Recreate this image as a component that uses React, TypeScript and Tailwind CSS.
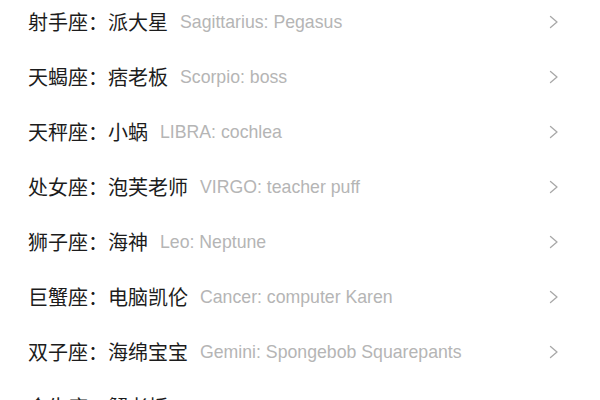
const rows = [
  { zh: '射手座：', name: '派大星', en: 'Sagittarius: Pegasus' },
  { zh: '天蝎座：', name: '痞老板', en: 'Scorpio: boss' },
  { zh: '天秤座：', name: '小蜗', en: 'LIBRA: cochlea' },
  { zh: '处女座：', name: '泡芙老师', en: 'VIRGO: teacher puff' },
  { zh: '狮子座：', name: '海神', en: 'Leo: Neptune' },
  { zh: '巨蟹座：', name: '电脑凯伦', en: 'Cancer: computer Karen' },
  { zh: '双子座：', name: '海绵宝宝', en: 'Gemini: Spongebob Squarepants' },
  { zh: '金牛座：', name: '蟹老板', en: 'Taurus: crab boss' },
];

const Chevron = () => (
  <svg width="12" height="14" viewBox="0 0 12 14" fill="none" className="shrink-0">
    <path d="M2.5 1.5 L9 7 L2.5 12.5" stroke="#a8a8a8" strokeWidth="1.3" strokeLinecap="round" strokeLinejoin="round" />
  </svg>
);

export default function App() {
  return (
    <div className="w-[600px] h-[400px] overflow-hidden bg-white">
      {rows.map((r) => (
        <div key={r.zh} className="h-[55px] flex items-start pt-[10px] pl-[28px] pr-[40px]">
          <div className="flex-1 flex items-center h-[24px] whitespace-nowrap">
            <span className="text-[20px] leading-[24px] text-[#1c1c1c] font-['Noto_Sans_CJK_SC',sans-serif]">
              {r.zh}{r.name}
            </span>
            <span className="ml-[12px] text-[17.7px] leading-[24px] text-[#b5b5b5] font-['Liberation_Sans',Arial,sans-serif]">
              {r.en}
            </span>
          </div>
          <div className="h-[24px] flex items-center">
            <Chevron />
          </div>
        </div>
      ))}
    </div>
  );
}
